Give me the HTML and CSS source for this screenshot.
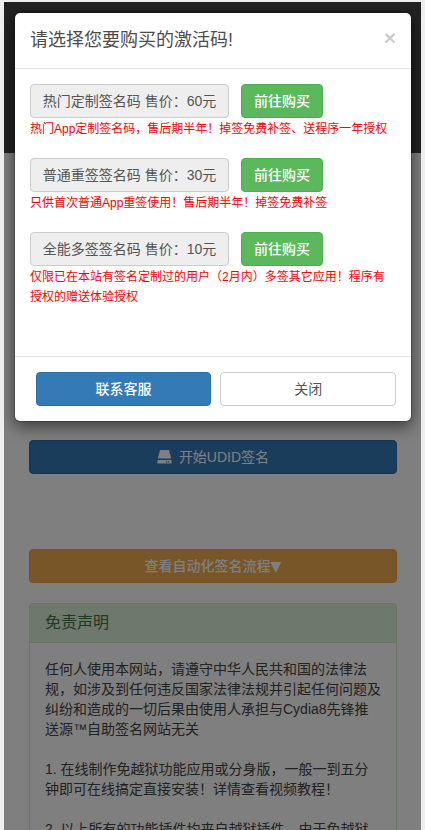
FILE: index.html
```html
<!DOCTYPE html>
<html lang="zh-CN">
<head>
<meta charset="utf-8">
<title>激活码</title>
<link rel="stylesheet" href="styles.css">
</head>
<body>
<div class="shell">
  <header class="top-band"></header>
  <main class="main">
    <a class="btn btn-blue">
      <svg class="hdd" viewBox="0 0 15 14" aria-hidden="true"><path d="M3 0h9l2.2 8.6H.8z"/><path fill-rule="evenodd" d="M0.5 10h14v3.6h-14zM11 11.2v1.2h1.2v-1.2zM9 11.2v1.2h1.2v-1.2z"/></svg>
      <span>开始UDID签名</span>
    </a>
    <a class="btn btn-orange"><span>查看自动化签名流程</span><span class="tri">▼</span></a>
    <section class="panel">
      <h3 class="panel-head">免责声明</h3>
      <div class="panel-body">
        <p>任何人使用本网站，请遵守中华人民共和国的法律法规，如涉及到任何违反国家法律法规并引起任何问题及纠纷和造成的一切后果由使用人承担与Cydia8先锋推送源™自助签名网站无关</p>
        <p>1. 在线制作免越狱功能应用或分身版，一般一到五分钟即可在线搞定直接安装！详情查看视频教程！</p>
        <p>2. 以上所有的功能插件均来自越狱插件，由于免越狱</p>
      </div>
    </section>
  </main>
  <div class="overlay">
    <div class="modal">
      <div class="modal-head">
        <h4 class="modal-title">请选择您要购买的激活码!</h4>
        <span class="close">×</span>
      </div>
      <div class="modal-body">
        <div class="item">
          <div class="row"><span class="price">热门定制签名码 售价：60元</span><a class="buy">前往购买</a></div>
          <p class="note">热门App定制签名码，售后期半年！掉签免费补签、送程序一年授权</p>
        </div>
        <div class="item">
          <div class="row"><span class="price">普通重签签名码 售价：30元</span><a class="buy">前往购买</a></div>
          <p class="note">只供首次普通App重签使用！售后期半年！掉签免费补签</p>
        </div>
        <div class="item">
          <div class="row"><span class="price">全能多签签名码 售价：10元</span><a class="buy">前往购买</a></div>
          <p class="note">仅限已在本站有签名定制过的用户（2月内）多签其它应用！程序有授权的赠送体验授权</p>
        </div>
      </div>
      <div class="modal-foot">
        <a class="foot-btn foot-primary">联系客服</a>
        <a class="foot-btn foot-plain">关闭</a>
      </div>
    </div>
  </div>
</div>
</body>
</html>
```
FILE: styles.css
```css
* { box-sizing: border-box; }
html, body { margin: 0; padding: 0; height: 100%; overflow: hidden; }
body {
  background: #eeeeee;
  padding: 2px 4px 0;
  font-family: "Liberation Sans", "Noto Sans CJK SC", sans-serif;
  font-size: 14px;
  line-height: 20px;
  color: #333;
}
.shell { position: relative; height: 828px; overflow: hidden; background: #fff; }
.top-band { height: 151px; background: #444; }
.main { padding: 287px 24px 0 25px; }
.btn {
  display: flex; align-items: center; justify-content: center;
  height: 34px; border-radius: 4px; color: #fff; border: 1px solid transparent;
}
.btn-blue { background: #337ab7; border-color: #2e6da4; gap: 7px; }
.btn-orange { background: #f0ad4e; border-color: #eea236; margin-top: 75px; font-weight: 500; }
.tri { font-family: "DejaVu Sans", sans-serif; font-weight: 400; }
.hdd { width: 15px; height: 14px; fill: #fff; }
.panel { margin-top: 20px; border: 1px solid #d6e9c6; border-radius: 4px; }
.panel-head {
  margin: 0; padding: 10px 15px; height: 39px;
  background: #dff0d8; border-bottom: 1px solid #d6e9c6;
  color: #3c763d; font-size: 16px; font-weight: 400; line-height: 18px;
}
.panel-body { padding: 16px 15px 15px; color: #444; }
.panel-body p { margin: 0 0 20px; }
.overlay { position: absolute; inset: 0; background: rgba(0, 0, 0, .5); }
.modal {
  width: 398px; margin: 10px 0 0 10px;
  background: #fff; background-clip: padding-box;
  border: 1px solid rgba(0, 0, 0, .2); border-radius: 6px;
  box-shadow: 0 5px 15px rgba(0, 0, 0, .5);
}
.modal-head {
  display: flex; justify-content: space-between; align-items: flex-start;
  height: 56px; padding: 15px; border-bottom: 1px solid #e5e5e5;
}
.modal-title { margin: 0; font-size: 18px; font-weight: 400; line-height: 25px; color: #4d4d4d; }
.close { font-size: 21px; font-weight: 700; line-height: 20px; color: #000; opacity: .2; text-shadow: 0 1px 0 #fff; }
.modal-body { padding: 15px 15px 30px; }
.item { margin-bottom: 20px; }
.row { display: flex; gap: 12px; }
.price {
  width: 199px; height: 34px; display: flex; align-items: center; justify-content: center;
  background: #eee; border: 1px solid #ccc; border-radius: 4px; color: #555;
}
.buy {
  width: 82px; height: 34px; display: flex; align-items: center; justify-content: center;
  background: #5cb85c; border: 1px solid #4cae4c; border-radius: 4px; color: #fff; font-weight: 500;
}
.note { margin: 0 0 -1px; padding-top: 1px; font-size: 12px; line-height: 20px; color: #f00; }
.modal-foot {
  display: flex; justify-content: flex-end; gap: 9px;
  padding: 15px; border-top: 1px solid #e5e5e5;
}
.foot-btn {
  width: 48%; height: 34px; display: flex; align-items: center; justify-content: center;
  border-radius: 4px; border: 1px solid #ccc;
}
.foot-primary { background: #337ab7; border-color: #2e6da4; color: #fff; font-weight: 500; }
.foot-plain { background: #fff; color: #555; }
```
